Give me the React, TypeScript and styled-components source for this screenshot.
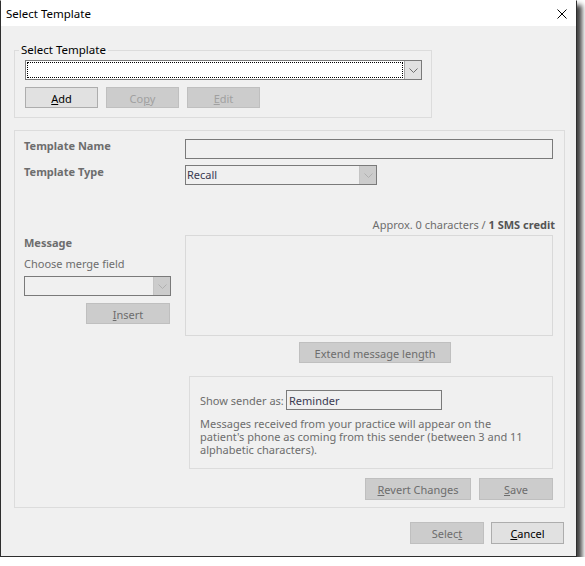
import React from "react";
import styled, { createGlobalStyle } from "styled-components";

const GlobalStyle = createGlobalStyle`
  * { box-sizing: border-box; }
  html, body { margin: 0; padding: 0; background: #ffffff; }
  body {
    font-family: "Noto Sans", "Open Sans", sans-serif;
    font-size: 11px;
    color: #000;
  }
`;

const Window = styled.div`
  width: 577px;
  height: 557px;
  background: #f0f0f0;
  border: 1px solid #2e2e2e;
  border-top-color: #ffffff;
  box-shadow: 5px 5px 5px rgba(0, 0, 0, 0.75);
  display: flex;
  flex-direction: column;
`;

const TitleBar = styled.div`
  height: 25px;
  background: #ffffff;
  display: flex;
  align-items: center;
  justify-content: space-between;
  padding: 0 9px 0 5px;
  font-size: 11.5px;
  color: #000;
`;

const CloseBox = styled.div`
  width: 10px;
  height: 10px;
  display: flex;
  margin-top: 1px;
`;

const Body = styled.div`
  flex: 1;
  padding: 17px 12px 0 13px;
  display: flex;
  flex-direction: column;
`;

const SelectGroup = styled.fieldset`
  margin: 0;
  width: 418px;
  border: 1px solid #dcdcdc;
  padding: 3px 10px 9px 10px;
  min-width: 0;
`;

const Legend = styled.legend`
  margin-left: -6px;
  padding: 0 2px;
  line-height: 14px;
  font-size: 11.5px;
  color: #000;
`;

const Combo = styled.div<{ $width: number; $disabled?: boolean }>`
  width: ${(p) => p.$width}px;
  height: 20px;
  border: 1px solid #7a7a7a;
  background: ${(p) => (p.$disabled ? "#f0f0f0" : "#ffffff")};
  display: flex;
  align-items: stretch;
`;

const ComboField = styled.div<{ $focus?: boolean }>`
  flex: 1;
  margin: ${(p) => (p.$focus ? "1px" : "0")};
  border: ${(p) => (p.$focus ? "1px dotted #000" : "none")};
  padding-left: 1px;
  display: flex;
  align-items: center;
  color: #3a3a52;
  line-height: 16px;
`;

const ComboArrow = styled.div<{ $disabled?: boolean }>`
  width: 17px;
  border-left: 1px solid ${(p) => (p.$disabled ? "#c4c4c4" : "#a6a6a6")};
  background: ${(p) => (p.$disabled ? "#cccccc" : "#e1e1e1")};
  display: flex;
  align-items: center;
  justify-content: center;
`;

const ButtonRow = styled.div<{ $gap: number; $end?: boolean }>`
  display: flex;
  gap: ${(p) => p.$gap}px;
  justify-content: ${(p) => (p.$end ? "flex-end" : "flex-start")};
`;

const Button = styled.div<{ $width: number; $height?: number; $state?: "on" | "off" | "faint" }>`
  width: ${(p) => p.$width}px;
  height: ${(p) => p.$height ?? 21}px;
  border: 1px solid ${(p) => (p.$state === "on" ? "#adadad" : "#bfbfbf")};
  background: ${(p) => (p.$state === "on" ? "#e1e1e1" : "#cccccc")};
  color: ${(p) => (p.$state === "on" ? "#000" : p.$state === "faint" ? "#a0a0a0" : "#6d6d6d")};
  display: flex;
  align-items: center;
  justify-content: center;
  padding-top: 1px;
`;

const MainGroup = styled.div`
  margin-top: 12px;
  width: 551px;
  height: 378px;
  border: 1px solid #dcdcdc;
  padding: 8px 11px 0 9px;
  display: flex;
  flex-direction: column;
`;

const FormRow = styled.div<{ $mt?: number }>`
  display: flex;
  align-items: flex-start;
  margin-top: ${(p) => p.$mt ?? 0}px;
`;

const FieldLabel = styled.div`
  width: 161px;
  font-weight: 700;
  color: #6d6d6d;
  line-height: 14px;
`;

const TextBox = styled.div<{ $width: number; $height?: number; $light?: boolean }>`
  width: ${(p) => p.$width}px;
  height: ${(p) => p.$height ?? 20}px;
  border: 1px solid ${(p) => (p.$light ? "#d9d9d9" : "#7a7a7a")};
  background: #f0f0f0;
  color: #3a3a52;
  padding-left: 2px;
  display: flex;
  align-items: center;
`;

const Approx = styled.div`
  margin-top: 32px;
  margin-right: -2px;
  text-align: right;
  line-height: 16px;
  color: #6d6d6d;
  b { color: #555; }
`;

const MessageRow = styled.div`
  display: flex;
  margin-top: 2px;
`;

const LeftCol = styled.div`
  width: 161px;
  display: flex;
  flex-direction: column;
  color: #6d6d6d;
`;

const SubLabel = styled.div`
  margin-top: 5px;
  line-height: 16px;
`;

const BoldLabel = styled.div`
  font-weight: 700;
  line-height: 16px;
`;

const Spaced = styled.div<{ $mt: number; $ml?: number }>`
  margin-top: ${(p) => p.$mt}px;
  margin-left: ${(p) => p.$ml ?? 0}px;
`;

const SenderGroup = styled.div`
  margin-top: 13px;
  margin-left: 165px;
  width: 364px;
  height: 93px;
  border: 1px solid #dcdcdc;
  padding: 13px 10px 0 10px;
  color: #6d6d6d;
`;

const SenderRow = styled.div`
  display: flex;
  align-items: center;
`;

const SenderLabel = styled.span`
  width: 86px;
`;

const SenderNote = styled.p`
  margin: 7px 0 0 0;
  line-height: 13px;
`;

const Footer = styled.div`
  margin-top: 14px;
`;

const Chevron = ({ color }: { color: string }) => (
  <svg width="9" height="5" viewBox="0 0 9 5">
    <polyline points="0.5,0.5 4.5,4.5 8.5,0.5" fill="none" stroke={color} strokeWidth="1" />
  </svg>
);

export default function App() {
  return (
    <>
      <GlobalStyle />
      <Window>
        <TitleBar>
          <span>Select Template</span>
          <CloseBox>
            <svg width="10" height="10" viewBox="0 0 10 10">
              <path d="M0.5 0.5 L9.5 9.5 M9.5 0.5 L0.5 9.5" stroke="#000" strokeWidth="1" />
            </svg>
          </CloseBox>
        </TitleBar>
        <Body>
          <SelectGroup>
            <Legend>Select Template</Legend>
            <Combo $width={397}>
              <ComboField $focus />
              <ComboArrow>
                <Chevron color="#6d6d6d" />
              </ComboArrow>
            </Combo>
            <Spaced $mt={7}>
              <ButtonRow $gap={8}>
                <Button $width={73} $state="on">
                  <span>
                    <u>A</u>dd
                  </span>
                </Button>
                <Button $width={73} $state="faint">
                  <span>
                    Co<u>p</u>y
                  </span>
                </Button>
                <Button $width={73} $state="faint">
                  <span>
                    <u>E</u>dit
                  </span>
                </Button>
              </ButtonRow>
            </Spaced>
          </SelectGroup>

          <MainGroup>
            <FormRow>
              <FieldLabel>Template Name</FieldLabel>
              <TextBox $width={368} />
            </FormRow>
            <FormRow $mt={6}>
              <FieldLabel>Template Type</FieldLabel>
              <Combo $width={192} $disabled>
                <ComboField>Recall</ComboField>
                <ComboArrow $disabled>
                  <Chevron color="#b0b0b0" />
                </ComboArrow>
              </Combo>
            </FormRow>
            <Approx>
              Approx. 0 characters / <b>1 SMS credit</b>
            </Approx>
            <MessageRow>
              <LeftCol>
                <BoldLabel>Message</BoldLabel>
                <SubLabel>Choose merge field</SubLabel>
                <Spaced $mt={4}>
                  <Combo $width={147} $disabled>
                    <ComboField />
                    <ComboArrow $disabled>
                      <Chevron color="#b0b0b0" />
                    </ComboArrow>
                  </Combo>
                </Spaced>
                <Spaced $mt={7} $ml={62}>
                  <Button $width={84}>
                    <span>
                      <u>I</u>nsert
                    </span>
                  </Button>
                </Spaced>
              </LeftCol>
              <TextBox $width={368} $height={101} $light />
            </MessageRow>
            <Spaced $mt={6} $ml={275}>
              <Button $width={152}>Extend message length</Button>
            </Spaced>
            <SenderGroup>
              <SenderRow>
                <SenderLabel>Show sender as:</SenderLabel>
                <TextBox $width={156}>Reminder</TextBox>
              </SenderRow>
              <SenderNote>
                Messages received from your practice will appear on the
                <br />
                patient's phone as coming from this sender (between 3 and 11
                <br />
                alphabetic characters).
              </SenderNote>
            </SenderGroup>
            <Spaced $mt={9}>
              <ButtonRow $gap={8} $end>
                <Button $width={106} $height={22}>
                  <span>
                    <u>R</u>evert Changes
                  </span>
                </Button>
                <Button $width={74} $height={22}>
                  <span>
                    <u>S</u>ave
                  </span>
                </Button>
              </ButtonRow>
            </Spaced>
          </MainGroup>

          <Footer>
            <ButtonRow $gap={7} $end>
              <Button $width={74} $height={22}>
                <span>
                  Selec<u>t</u>
                </span>
              </Button>
              <Button $width={73} $height={22} $state="on">
                <span>
                  <u>C</u>ancel
                </span>
              </Button>
            </ButtonRow>
          </Footer>
        </Body>
      </Window>
    </>
  );
}
